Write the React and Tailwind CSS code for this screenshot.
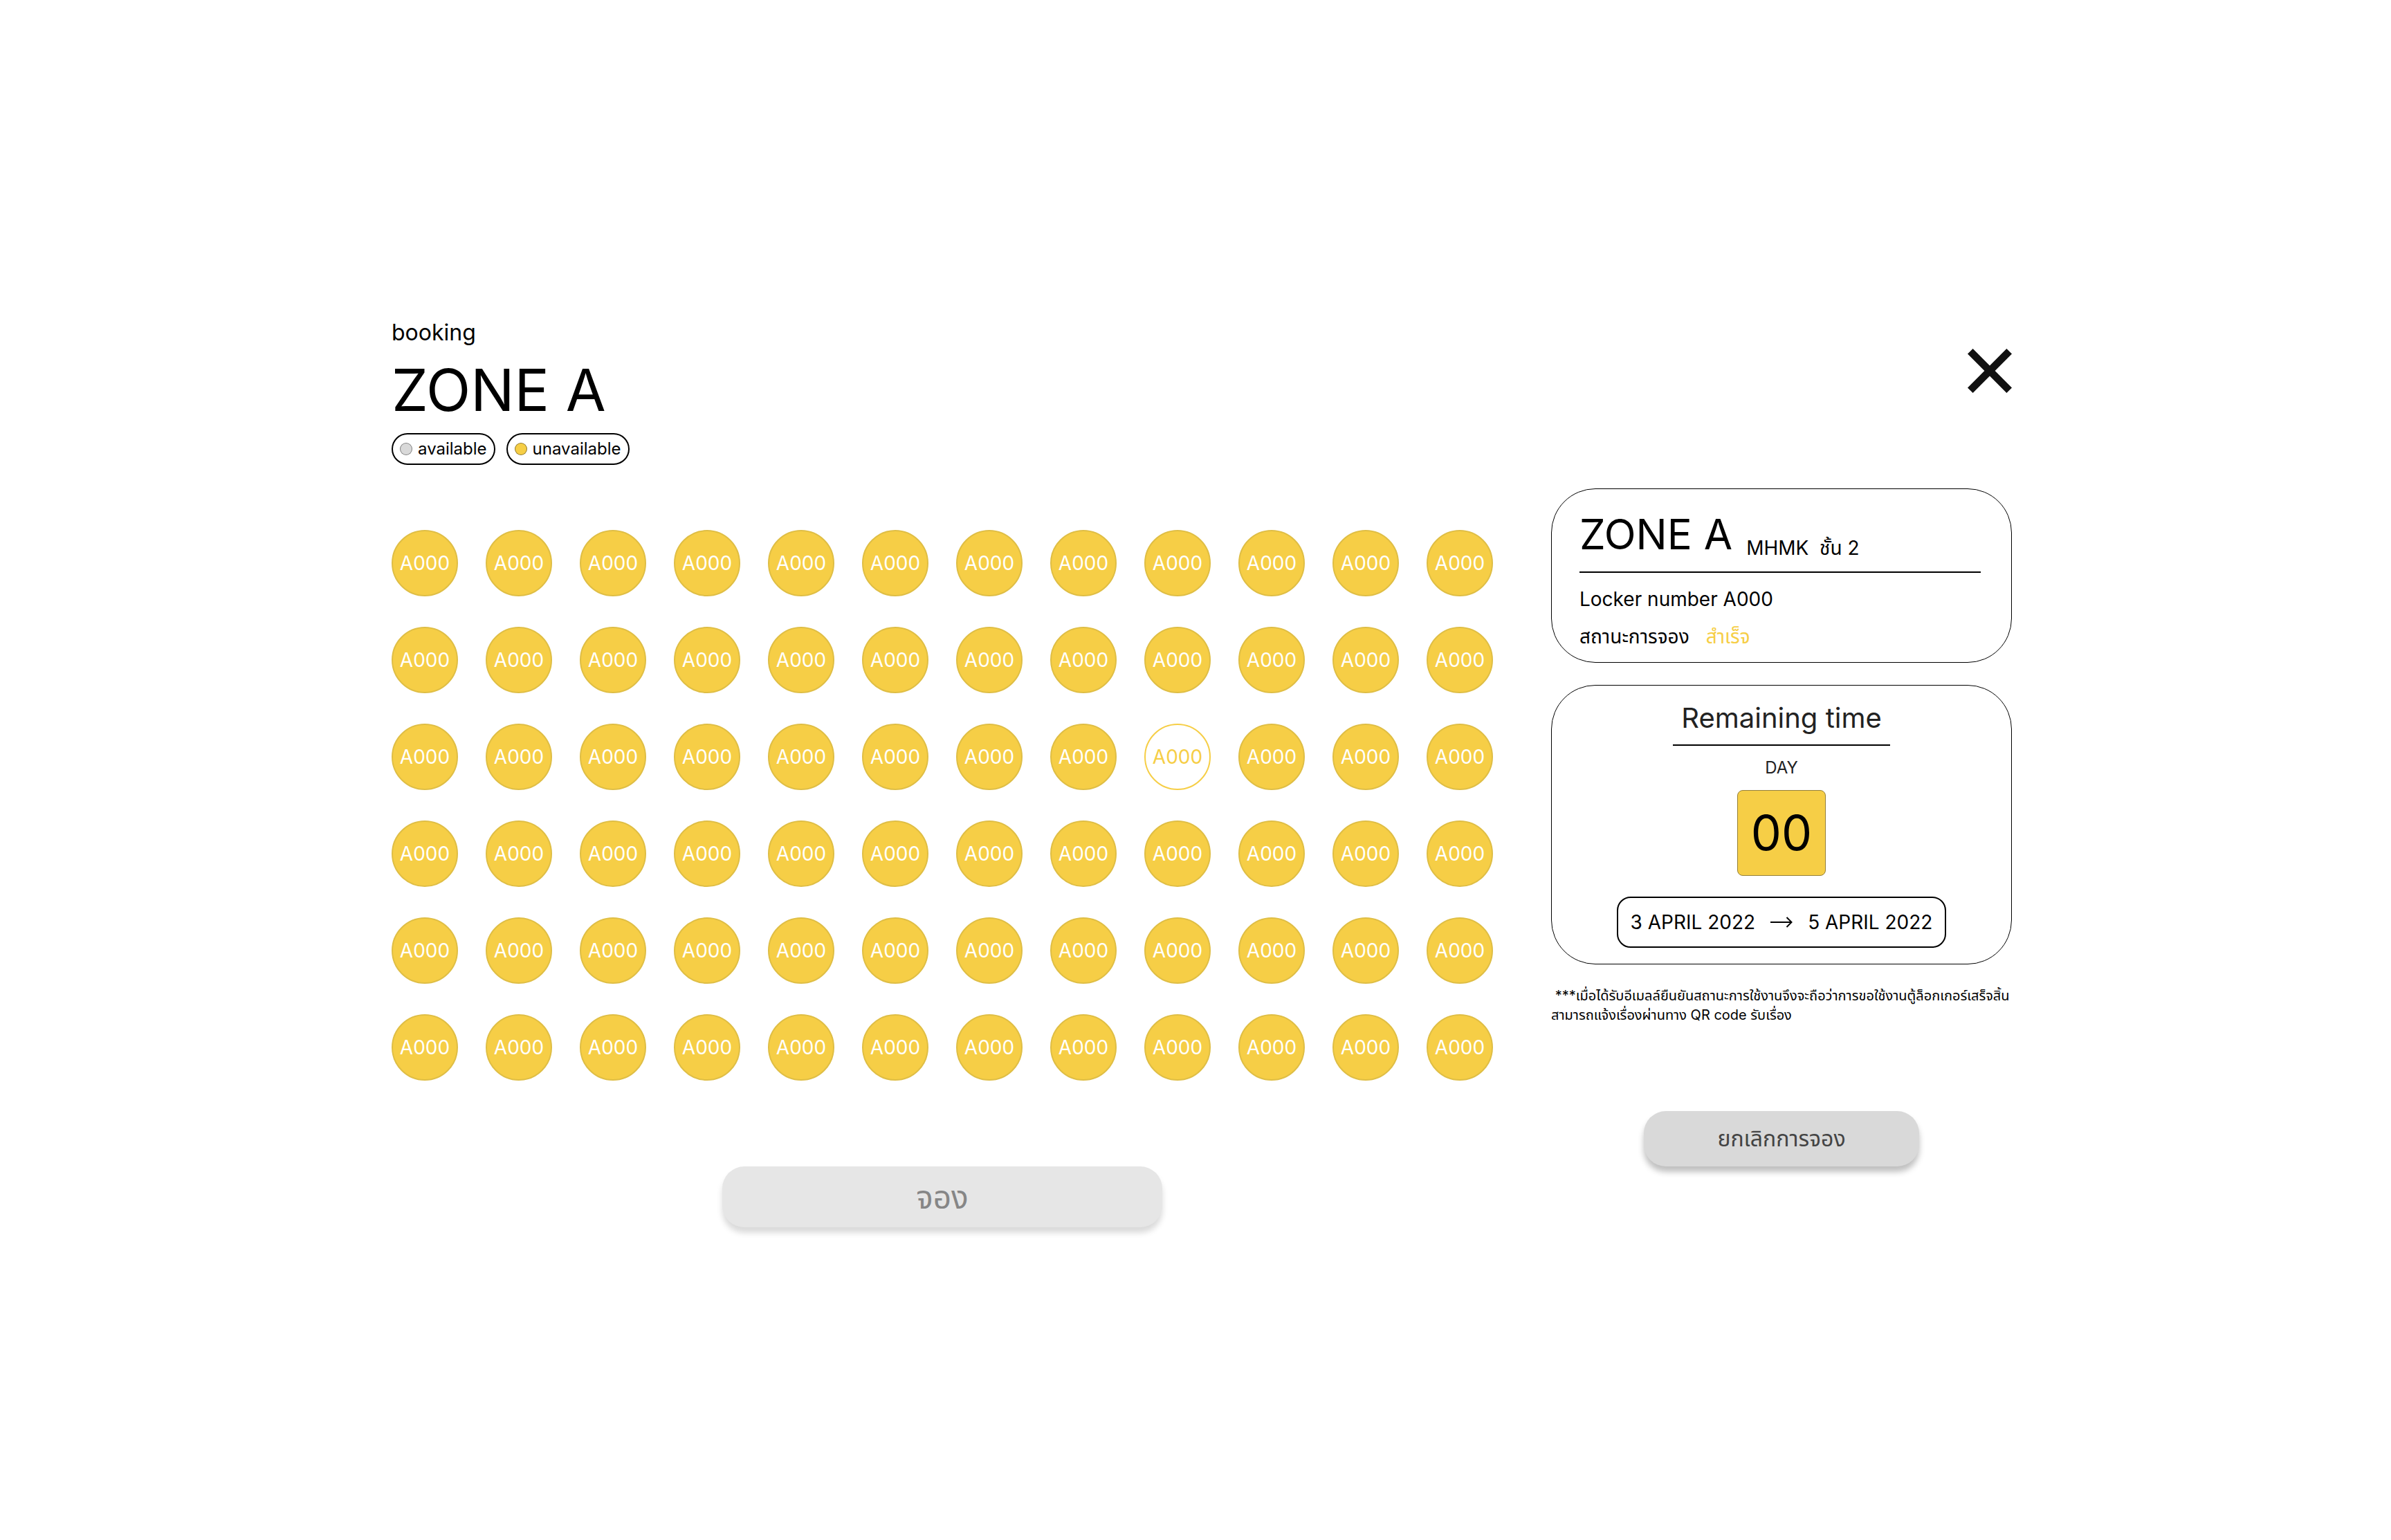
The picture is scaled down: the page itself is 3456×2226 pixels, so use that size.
import { useState } from "react";

const ROWS = 6;
const COLUMNS = 12;

function Legend({ label, dotClass }) {
  return (
    <li className="flex h-[46px] items-center gap-2 rounded-full border-2 border-black px-2.5 text-2xl leading-7">
      <span className={`size-[18px] rounded-full border border-black/40 ${dotClass}`} />
      {label}
    </li>
  );
}

function Locker({ name, selected, onSelect }) {
  const look = selected
    ? "border-2 border-[#f6ce46] bg-white text-[#f6ce46]"
    : "border-2 border-[#dfbe45] bg-[#f6ce46] text-white";
  return (
    <button
      type="button"
      aria-pressed={selected}
      onClick={onSelect}
      className={`flex size-24 items-center justify-center rounded-full text-[28px] leading-8 ${look}`}
    >
      {name}
    </button>
  );
}

function CloseIcon() {
  return (
    <svg viewBox="0 0 63 63" className="size-16" fill="#111111" aria-hidden="true">
      <path d="M7.5 0 31.5 24 55.5 0 63 7.5 39 31.5 63 55.5 55.5 63 31.5 39 7.5 63 0 55.5 24 31.5 0 7.5Z" />
    </svg>
  );
}

function ArrowIcon() {
  return (
    <svg viewBox="0 0 32 16" className="h-4 w-8" fill="none" stroke="black" strokeWidth="2" aria-hidden="true">
      <path d="M0 8H30M23.5 1 30.5 8 23.5 15" />
    </svg>
  );
}

export default function App() {
  const [selected, setSelected] = useState(2 * COLUMNS + 8);

  return (
    <main className="min-h-screen bg-white pt-[454px] pr-[548px] pb-20 pl-[566px] font-['Inter','Noto_Sans_Thai','Noto_Sans',sans-serif] text-black">
      <header className="flex items-start justify-between">
        <div>
          <p className="text-[32px] leading-[54px]">booking</p>
          <h1 className="text-[84px] leading-[112px]">ZONE A</h1>
          <ul className="mt-1.5 flex gap-4">
            <Legend label="available" dotClass="bg-[#d9d9d9]" />
            <Legend label="unavailable" dotClass="bg-[#f6ce46]" />
          </ul>
        </div>
        <button type="button" aria-label="Close" className="mt-[50px]">
          <CloseIcon />
        </button>
      </header>

      <div className="mt-[34px] flex items-start justify-between gap-[84px]">
        <section className="flex flex-1 flex-col items-center pt-[60px]">
          <div className="grid w-full grid-cols-[repeat(12,96px)] justify-between gap-y-11">
            {Array.from({ length: ROWS * COLUMNS }, (_, i) => (
              <Locker key={i} name="A000" selected={i === selected} onSelect={() => setSelected(i)} />
            ))}
          </div>
          <button
            type="button"
            className="mt-[124px] flex h-[88px] w-[636px] items-center justify-center rounded-[32px] bg-[#e6e6e6] text-[46px] leading-[56px] text-[#868686] shadow-[0_8px_8px_rgba(0,0,0,0.15)]"
          >
            จอง
          </button>
        </section>

        <aside className="flex w-[666px] flex-col">
          <section className="rounded-[64px] border border-black pt-[27px] pr-11 pb-[19px] pl-10">
            <div className="flex items-end gap-5 border-b-2 border-black pb-4">
              <h2 className="text-[60px] leading-[76px]">ZONE A</h2>
              <p className="whitespace-pre text-[28px] leading-9">MHMK  ชั้น 2</p>
            </div>
            <p className="mt-5 text-[28px] leading-9">Locker number A000</p>
            <p className="mt-[18px] flex gap-6 text-[28px] leading-9">
              สถานะการจอง <span className="text-[#f6ce46]">สำเร็จ</span>
            </p>
          </section>

          <section className="mt-8 flex flex-col items-center rounded-[64px] border border-black pt-5 pb-[23px]">
            <h2 className="w-[314px] border-b-2 border-black pb-[11px] text-center text-[40px] leading-[54px] text-[#222222]">
              Remaining time
            </h2>
            <p className="mt-4 text-2xl leading-8 text-[#222222]">DAY</p>
            <div className="mt-4 flex h-[124px] w-32 items-center justify-center rounded-lg border border-[#94803a] bg-[#f6ce46] text-[70px] leading-[88px]">
              00
            </div>
            <div className="mt-[30px] flex h-[74px] items-center gap-[22px] rounded-[20px] border-2 border-black px-[18px] text-[28px] leading-9">
              <span>3 APRIL 2022</span>
              <ArrowIcon />
              <span>5 APRIL 2022</span>
            </div>
          </section>

          <p className="mt-[31px] whitespace-pre text-xl leading-7">
            {" ***เมื่อได้รับอีเมลล์ยืนยันสถานะการใช้งานจึงจะถือว่าการขอใช้งานตู้ล็อกเกอร์เสร็จสิ้น\nสามารถแจ้งเรื่องผ่านทาง QR code รับเรื่อง"}
          </p>

          <button
            type="button"
            className="mt-[125px] flex h-20 w-[398px] items-center justify-center self-center rounded-[32px] bg-[#d9d9d9] text-[32px] leading-10 text-[#444444] shadow-[0_8px_8px_rgba(0,0,0,0.25)]"
          >
            ยกเลิกการจอง
          </button>
        </aside>
      </div>
    </main>
  );
}
